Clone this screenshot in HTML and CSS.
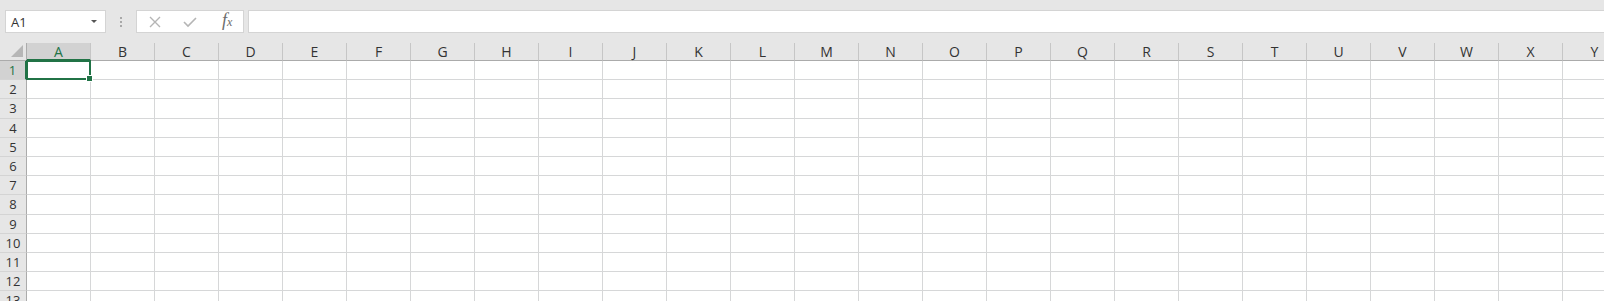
FILE: index.html
```html
<!DOCTYPE html>
<html lang="en">
<head>
    <meta charset="UTF-8">
    <title>Sheet1</title>
    <link rel="stylesheet" href="styles.css">
</head>
<body>
    <div class="toolbar">
        <div class="name-box">
            <span>A1</span>
            <span class="caret"></span>
        </div>
        <div class="grip"><i></i><i></i><i></i></div>
        <div class="fx-box">
            <svg class="icon" width="14" height="14" viewBox="0 0 14 14"><path d="M2 2 L12 12 M12 2 L2 12" stroke="#b5b5b5" stroke-width="1.4" fill="none"/></svg>
            <svg class="icon" width="16" height="14" viewBox="0 0 16 14"><path d="M2 7 L6 11 L14 3" stroke="#b5b5b5" stroke-width="1.6" fill="none"/></svg>
            <span class="fx">f<sub>x</sub></span>
        </div>
        <div class="formula"></div>
    </div>
    <div class="sheet" id="sheet">
        <!-- cells are generated below -->
    </div>
    <script>
        // Build header row and 13 rows of 25 columns
        const sheet = document.getElementById('sheet');
        const letters = 'ABCDEFGHIJKLMNOPQRSTUVWXY';

        const corner = document.createElement('div');
        corner.className = 'corner';
        sheet.appendChild(corner);

        for (let c = 0; c < letters.length; c++) {
            const head = document.createElement('div');
            head.className = 'col-head' + (c === 0 ? ' active' : '');
            head.textContent = letters[c];
            sheet.appendChild(head);
        }

        for (let r = 1; r <= 13; r++) {
            const rowHead = document.createElement('div');
            rowHead.className = 'row-head' + (r === 1 ? ' active' : '');
            rowHead.textContent = r;
            sheet.appendChild(rowHead);

            for (let c = 0; c < letters.length; c++) {
                const cell = document.createElement('div');
                cell.className = 'cell' + (r === 1 && c === 0 ? ' selected' : '');
                sheet.appendChild(cell);
            }
        }
    </script>
</body>
</html>
```

FILE: styles.css
```css
body {
    margin: 0;
    font-family: "Open Sans", "Noto Sans", sans-serif;
    background-color: #ffffff;
    overflow: hidden;
}

.toolbar {
    height: 43px;
    background-color: #e6e6e6;
    display: flex;
    align-items: center;
    padding-left: 5px;
    box-sizing: border-box;
}

.name-box {
    width: 101px;
    height: 23px;
    box-sizing: border-box;
    background-color: #fff;
    border: 1px solid #d4d4d4;
    display: flex;
    align-items: center;
    justify-content: space-between;
    padding: 0 8px 0 5px;
    font-size: 13px;
    color: #333;
}

.caret {
    width: 0;
    height: 0;
    border-left: 3px solid transparent;
    border-right: 3px solid transparent;
    border-top: 3px solid #555;
}

.grip {
    width: 30px;
    display: flex;
    flex-direction: column;
    align-items: center;
    gap: 2px;
}

.grip i {
    width: 2px;
    height: 2px;
    background-color: #a8a8a8;
}

.fx-box {
    width: 108px;
    height: 23px;
    box-sizing: border-box;
    background-color: #fff;
    border: 1px solid #d4d4d4;
    display: flex;
    align-items: center;
    padding-left: 11px;
    gap: 20px;
}

.fx {
    font-family: "Liberation Serif", serif;
    font-style: italic;
    font-size: 18px;
    color: #6c6c6c;
    margin-left: 4px;
    margin-bottom: 4px;
    line-height: 1;
}

.fx sub {
    font-size: 12px;
    vertical-align: 0;
}

.formula {
    flex: 1;
    height: 23px;
    margin-left: 4px;
    background-color: #fff;
    border: 1px solid #d4d4d4;
    border-right: none;
    box-sizing: border-box;
}

.sheet {
    display: grid;
    grid-template-columns: 27px repeat(25, 64px);
    grid-template-rows: 18px repeat(13, 19.2px);
}

.corner,
.col-head,
.row-head {
    background-color: #e6e6e6;
    font-size: 14px;
    color: #333;
    display: flex;
    align-items: center;
    justify-content: center;
    box-sizing: border-box;
}

.corner {
    position: relative;
    border-right: 1px solid #ababab;
    border-bottom: 1px solid #ababab;
}

.corner::after {
    content: "";
    position: absolute;
    right: 3px;
    bottom: 3px;
    width: 0;
    height: 0;
    border-left: 12px solid transparent;
    border-bottom: 12px solid #b6b6b6;
}

.col-head {
    border-right: 1px solid #c6c6c6;
    border-bottom: 1px solid #ababab;
}

.row-head {
    border-right: 1px solid #ababab;
    border-bottom: 1px solid #d4d4d4;
    font-size: 13px;
}

.col-head.active,
.row-head.active {
    background-color: #d2d2d2;
    color: #217346;
}

.col-head.active {
    border-bottom: 2px solid #217346;
}

.row-head.active {
    border-right: 2px solid #217346;
}

.cell {
    border-right: 1px solid #d6d7d8;
    border-bottom: 1px solid #d6d7d8;
    box-sizing: border-box;
}

.cell.selected {
    position: relative;
    border: 2px solid #217346;
    margin: -1px 0 0 -1px;
}

.cell.selected::after {
    content: "";
    position: absolute;
    right: -4px;
    bottom: -4px;
    width: 5px;
    height: 5px;
    background-color: #217346;
    border: 1px solid #fff;
}
```
